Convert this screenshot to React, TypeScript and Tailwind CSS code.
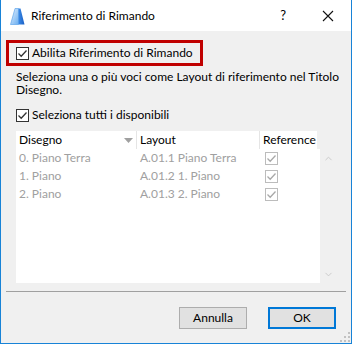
import { ChevronUp, ChevronDown } from 'lucide-react';

const font = { fontFamily: 'Lato, "Noto Sans", sans-serif' };

function Check({ disabled = false }: { disabled?: boolean }) {
  return (
    <span
      className={`inline-flex w-[13px] h-[13px] shrink-0 items-center justify-center border ${
        disabled ? 'border-[#bcbcbc] bg-white' : 'border-[#333333] bg-white'
      }`}
    >
      <svg width="11" height="11" viewBox="0 0 11 11">
        <path d="M1.5 5.5 L4.2 8.2 L9.5 2.5" fill="none" stroke={disabled ? '#a8a8a8' : '#333333'} strokeWidth="1.3" />
      </svg>
    </span>
  );
}

function Logo() {
  return (
    <svg width="15" height="17" viewBox="0 0 15 17">
      <defs>
        <linearGradient id="lg1" x1="0" y1="0" x2="1" y2="1">
          <stop offset="0" stopColor="#e6f2ff" />
          <stop offset="1" stopColor="#6aaef0" />
        </linearGradient>
        <linearGradient id="lg2" x1="0" y1="0" x2="1" y2="0">
          <stop offset="0" stopColor="#3a8ae6" />
          <stop offset="1" stopColor="#1a5fc4" />
        </linearGradient>
      </defs>
      <path d="M0.5 16.5 L5 0.5 L8.5 0.5 L8.5 16.5 Z" fill="url(#lg1)" stroke="#4d9ae8" strokeWidth="0.6" />
      <path d="M8.5 0.5 L10.5 0.5 L14.5 16.5 L8.5 16.5 Z" fill="url(#lg2)" />
    </svg>
  );
}

const rows = [
  ['0. Piano Terra', 'A.01.1 Piano Terra'],
  ['1. Piano', 'A.01.2 1. Piano'],
  ['2. Piano', 'A.01.3 2. Piano'],
];

export default function App() {
  return (
    <div
      className="w-[352px] h-[344px] flex flex-col border-l border-r border-b border-[#1883d7] text-[12px] text-black bg-[#f0f0f0]"
      style={font}
    >
      {/* title bar */}
      <div className="h-[31px] bg-white flex items-center shrink-0">
        <div className="ml-[9px] mt-[1px]">
          <Logo />
        </div>
        <span className="ml-[6px] text-[12px] whitespace-nowrap">Riferimento di Rimando</span>
        <span className="ml-auto mr-[36px] text-[13px]">?</span>
        <svg className="mr-[17px]" width="12" height="12" viewBox="0 0 12 12">
          <path d="M1 1 L11 11 M11 1 L1 11" stroke="#111" strokeWidth="1.1" />
        </svg>
      </div>

      {/* body */}
      <div className="flex-1 flex flex-col">
        <div className="mt-[9px] ml-[5px] w-[197px] h-[26px] border-[3px] border-[#c00000] flex items-center pl-[7px] gap-[3px]">
          <Check />
          <span className="whitespace-nowrap">Abilita Riferimento di Rimando</span>
        </div>

        <p className="ml-[15px] mt-[4px] w-[325px] leading-[13px]">
          Seleziona una o più voci come Layout di riferimento nel Titolo Disegno.
        </p>

        <div className="ml-[15px] mt-[12px] h-[14px] flex items-center gap-[3px]">
          <Check />
          <span className="whitespace-nowrap">Seleziona tutti i disponibili</span>
        </div>

        {/* table */}
        <div className="ml-[15px] mt-[9px] flex">
          <div className="w-[304px] h-[152px] flex flex-col">
            <div className="h-[18px] flex">
              <div className="w-[121px] bg-white flex items-center pl-[3px] border-r border-[#e5e5e5]">
                <span>Disegno</span>
                <svg className="ml-auto mr-[3px]" width="9" height="5" viewBox="0 0 9 5">
                  <path d="M0 0 L9 0 L4.5 5 Z" fill="#a0a0a0" />
                </svg>
              </div>
              <div className="w-[123px] bg-white flex items-center pl-[3px] border-r border-[#e5e5e5]">Layout</div>
              <div className="w-[57px] bg-white flex items-center pl-[3px]">Reference</div>
              <div className="flex-1" />
            </div>
            <div className="flex-1 bg-white text-[#a0a0a0]">
              {rows.map(([d, l]) => (
                <div key={d} className="h-[18px] flex items-center whitespace-nowrap">
                  <span className="w-[121px] pl-[3px]">{d}</span>
                  <span className="w-[123px] pl-[3px]">{l}</span>
                  <span className="pl-[5px] flex">
                    <Check disabled />
                  </span>
                </div>
              ))}
            </div>
          </div>
          <div className="w-[16px] mt-[18px] flex flex-col items-center justify-between text-[#c8c8c8] pt-[4px] pb-[3px]">
            <ChevronUp size={11} strokeWidth={2} />
            <ChevronDown size={11} strokeWidth={2} />
          </div>
        </div>

        <div className="ml-[5px] mt-[8px] w-[340px] h-px bg-[#a0a0a0]" />

        <div className="mt-[15px] flex justify-end gap-[21px] mr-[15px]">
          <button className="w-[68px] h-[22px] bg-[#e1e1e1] border border-[#adadad] text-[12px]">Annulla</button>
          <button className="w-[68px] h-[22px] bg-[#e1e1e1] border-2 border-[#0078d7] text-[12px]">OK</button>
        </div>

        <div className="mt-auto mb-[1px] mr-[1px] self-end">
          <svg width="10" height="10" viewBox="0 0 10 10">
            {[
              [8, 0], [4, 4], [8, 4], [0, 8], [4, 8], [8, 8],
            ].map(([x, y]) => (
              <rect key={`${x}-${y}`} x={x} y={y} width="2" height="2" fill="#c2c2c2" />
            ))}
          </svg>
        </div>
      </div>
    </div>
  );
}
